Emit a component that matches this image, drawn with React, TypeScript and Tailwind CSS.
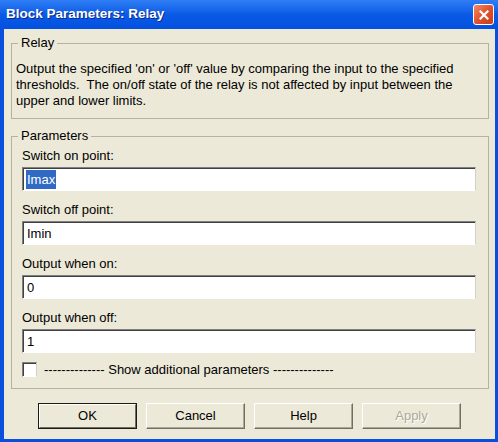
import React from "react";

const font = { fontFamily: '"Liberation Sans", Arial, sans-serif' };

function Field({ label, value, selected }: { label: string; value: string; selected?: boolean }) {
  return (
    <div className="flex flex-col">
      <div className="h-[16px] leading-[16px]">{label}</div>
      <div className="mt-[3px] h-[24px] bg-white border border-t-[#808080] border-l-[#808080] border-b-white border-r-[#d4d0c8] shadow-[inset_1px_1px_0_#404040] pl-[3px] flex items-center">
        {selected ? (
          <span className="bg-[#316ac5] text-white leading-[19px] px-[1px]">{value}</span>
        ) : (
          <span className="leading-[19px] px-[1px]">{value}</span>
        )}
      </div>
    </div>
  );
}

function Button({ children, isDefault, disabled }: { children: React.ReactNode; isDefault?: boolean; disabled?: boolean }) {
  if (isDefault) {
    return (
      <div className="w-[99px] h-[26px] border border-[#1a1a1a] bg-[#ece9d8]">
        <div className="w-full h-full border border-t-white border-l-white border-b-[#716f64] border-r-[#716f64] flex items-center justify-center">
          {children}
        </div>
      </div>
    );
  }
  return (
    <div className="w-[99px] h-[26px] bg-[#ece9d8] border border-t-white border-l-white border-b-[#716f64] border-r-[#716f64] shadow-[inset_-1px_-1px_0_#aca899] flex items-center justify-center">
      <span className={disabled ? "text-[#aca899] [text-shadow:1px_1px_0_#fff]" : ""}>{children}</span>
    </div>
  );
}

export default function App() {
  return (
    <div
      className="w-[498px] h-[442px] bg-[#0a50dc] flex flex-col text-[13px] text-black overflow-hidden"
      style={font}
    >
      {/* title bar */}
      <div className="h-[29px] shrink-0 flex items-center justify-between pl-[6px] pr-[4px] bg-gradient-to-b from-[#2f7ef5] via-[#0a5ae6] to-[#0450e0]">
        <span className="text-white font-bold text-[13.5px] [text-shadow:1px_1px_0_#0a2a8a]">
          Block Parameters: Relay
        </span>
        <div className="w-[21px] h-[21px] rounded-[3px] border border-white bg-gradient-to-br from-[#f08a66] via-[#e0522c] to-[#c83c16] flex items-center justify-center">
          <svg width="10" height="10" viewBox="0 0 10 10">
            <path d="M1.5 1.5 L8.5 8.5 M8.5 1.5 L1.5 8.5" stroke="white" strokeWidth="2.2" strokeLinecap="square" />
          </svg>
        </div>
      </div>

      {/* client */}
      <div className="flex-1 ml-[4px] mr-[3px] mb-[3px] bg-[#ece9d8] pt-[6px] flex flex-col">
        <fieldset className="ml-[7px] mr-[6px] border border-[#b5b2a2] pl-[4px] pr-[8px] pt-[10px] pb-[9px]">
          <legend className="ml-[2px] px-[3px] leading-[16px]">Relay</legend>
          <p className="leading-[16px]">
            Output the specified 'on' or 'off' value by comparing the input to the specified thresholds.&nbsp; The on/off state of the relay is not affected by input between the upper and lower limits.
          </p>
        </fieldset>

        <fieldset className="mt-[9px] ml-[7px] mr-[6px] border border-[#b5b2a2] pl-[4px] pr-[4px] pt-[4px] pb-[11px]">
          <legend className="ml-[2px] px-[3px] leading-[16px]">Parameters</legend>
          <div className="pl-[6px] pr-[8px] flex flex-col">
            <div className="flex flex-col gap-[11px]">
              <Field label="Switch on point:" value="Imax" selected />
              <Field label="Switch off point:" value="Imin" />
              <Field label="Output when on:" value="0" />
              <Field label="Output when off:" value="1" />
            </div>
            <div className="mt-[9px] flex items-center h-[15px]">
              <div className="w-[15px] h-[15px] bg-white border border-t-[#808080] border-l-[#808080] border-b-white border-r-[#d4d0c8] shadow-[inset_1px_1px_0_#404040]" />
              <span className="ml-[7px] leading-[16px]">
                -------------- Show additional parameters --------------
              </span>
            </div>
          </div>
        </fieldset>

        <div className="mt-[14px] pl-[34px] flex gap-[9px]">
          <Button isDefault>OK</Button>
          <Button>Cancel</Button>
          <Button>Help</Button>
          <Button disabled>Apply</Button>
        </div>
      </div>
    </div>
  );
}
